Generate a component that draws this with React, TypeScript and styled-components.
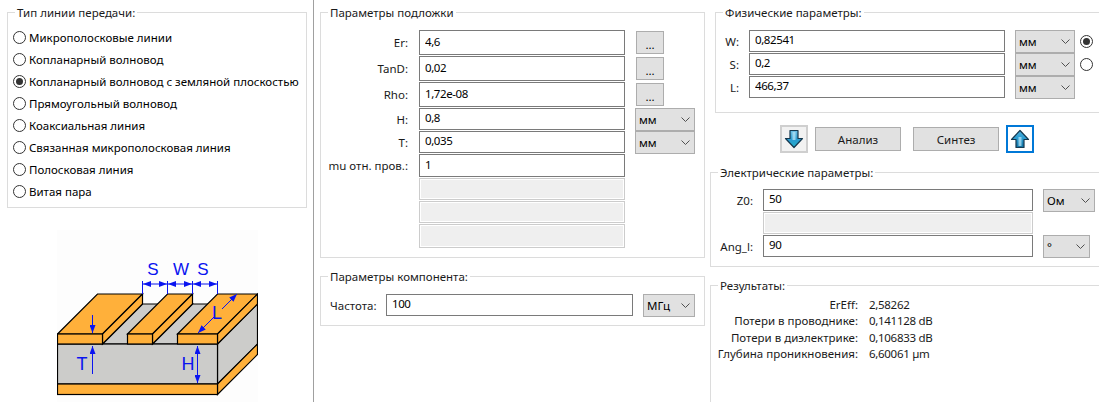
import styled, { createGlobalStyle } from "styled-components";

const GlobalStyle = createGlobalStyle`
  html, body {
    margin: 0;
    padding: 0;
    background: #ffffff;
  }
  body {
    font-family: "Noto Sans", "Open Sans", sans-serif;
    font-size: 11.5px;
    color: #000000;
  }
`;

const Page = styled.div`
  display: flex;
  width: 1099px;
  height: 402px;
  overflow: hidden;
`;

const LeftColumn = styled.div`
  flex: none;
  width: 314px;
  height: 402px;
  box-sizing: border-box;
  padding: 4px 0 0 7px;
  border-right: 1px solid #a0a0a0;
`;

const MiddleColumn = styled.div`
  flex: none;
  width: 391px;
  padding: 4px 0 0 6px;
  box-sizing: border-box;
  display: flex;
  flex-direction: column;
  gap: 10px;
`;

const RightColumn = styled.div`
  flex: none;
  width: 394px;
  padding: 4px 0 0 5px;
  box-sizing: border-box;
`;

const Group = styled.fieldset<{ $w: number; $h: number; $pt: number; $ml?: number; $mt?: number }>`
  margin: ${(p) => p.$mt ?? 0}px 0 0 ${(p) => p.$ml ?? 0}px;
  padding: ${(p) => p.$pt}px 0 0 0;
  width: ${(p) => p.$w}px;
  height: ${(p) => p.$h}px;
  box-sizing: border-box;
  min-width: 0;
  border: 1px solid #dcdcdc;
`;

const Caption = styled.legend`
  margin-left: 7px;
  padding: 0 2px;
  line-height: 17px;
  height: 17px;
  font-size: 11.5px;
  color: #1a1a1a;
`;

const RadioRow = styled.label`
  display: flex;
  align-items: center;
  gap: 3px;
  height: 22.1px;
  padding-left: 5px;
  white-space: nowrap;
`;

const RadioMark = styled.span<{ $on?: boolean }>`
  flex: none;
  width: 13px;
  height: 13px;
  box-sizing: border-box;
  border: 1px solid #333333;
  border-radius: 50%;
  display: flex;
  align-items: center;
  justify-content: center;

  &::after {
    content: "";
    display: ${(p) => (p.$on ? "block" : "none")};
    width: 7px;
    height: 7px;
    border-radius: 50%;
    background: #333333;
  }
`;

const DiagramBox = styled.div`
  margin: 22px 0 0 50px;
  width: 201px;
  height: 172px;
  background: #fdfdfd;
`;

const Row = styled.div<{ $h: number; $gap?: number }>`
  display: flex;
  gap: ${(p) => p.$gap ?? 10}px;
  height: ${(p) => p.$h}px;
  padding-bottom: 1px;
  box-sizing: border-box;
`;

const FieldLabel = styled.span<{ $w: number; $left?: boolean }>`
  flex: none;
  width: ${(p) => p.$w}px;
  display: flex;
  align-items: center;
  justify-content: ${(p) => (p.$left ? "flex-start" : "flex-end")};
  padding-left: ${(p) => (p.$left ? 9 : 0)}px;
  box-sizing: border-box;
  white-space: nowrap;
  color: #1a1a1a;
`;

const Field = styled.input<{ $w: number }>`
  flex: none;
  width: ${(p) => p.$w}px;
  box-sizing: border-box;
  margin: 0;
  padding: 0 5px 3px;
  font: inherit;
  letter-spacing: -0.4px;
  color: #000000;
  background: #ffffff;
  border: 1px solid #7a7a7a;
  outline: none;
  border-radius: 0;

  &:disabled {
    background: #efefef;
    border-color: #cccccc;
    box-shadow: inset 0 0 0 1px #ffffff;
  }
`;

const DotsButton = styled.button`
  flex: none;
  width: 28px;
  margin: 1px 0;
  padding: 4px 0 0;
  font: inherit;
  color: #000000;
  background: #e1e1e1;
  border: 1px solid #adadad;
  border-radius: 0;
`;

const Combo = styled.div<{ $w: number; $ml?: number }>`
  flex: none;
  width: ${(p) => p.$w}px;
  margin: 0 0 -1px ${(p) => p.$ml ?? 0}px;
  box-sizing: border-box;
  display: flex;
  align-items: center;
  justify-content: space-between;
  padding: 0 4px 0 3px;
  background: #e1e1e1;
  border: 1px solid #adadad;
  color: #000000;
`;

const ComboRadio = styled(RadioMark)`
  align-self: center;
  margin-left: -5px;
`;

const ActionRow = styled.div`
  display: flex;
  align-items: center;
  margin: 12px 0 11px 70px;
  height: 28px;
`;

const ArrowButton = styled.button<{ $focused?: boolean; $ml?: number }>`
  flex: none;
  width: 28px;
  height: 28px;
  margin-left: ${(p) => p.$ml ?? 0}px;
  padding: 0;
  display: flex;
  align-items: center;
  justify-content: center;
  box-sizing: border-box;
  background: ${(p) => (p.$focused ? "#ffffff" : "#f2f2f2")};
  border: 2px solid ${(p) => (p.$focused ? "#0078d7" : "#cfcfcf")};
  border-radius: 0;
`;

const ActionButton = styled.button<{ $ml: number }>`
  flex: none;
  width: 86px;
  height: 24px;
  margin-left: ${(p) => p.$ml}px;
  padding: 0;
  font: inherit;
  color: #1a1a1a;
  background: #e1e1e1;
  border: 1px solid #adadad;
  border-radius: 0;
`;

const ResultRow = styled.div`
  display: grid;
  grid-template-columns: 147px auto;
  column-gap: 11px;
  height: 16.3px;
  line-height: 16px;
  white-space: nowrap;
  color: #1a1a1a;
`;

const ResultName = styled.span`
  text-align: right;
`;

const ResultValue = styled.span`
  letter-spacing: -0.3px;
`;

const Chevron = () => (
  <svg width="9" height="5" viewBox="0 0 9 5" fill="none">
    <polyline points="0.5,0.5 4.5,4.5 8.5,0.5" stroke="#505050" strokeWidth="1" />
  </svg>
);

const DownArrow = () => (
  <svg width="20" height="20" viewBox="0 0 20 20">
    <defs>
      <linearGradient id="downFill" x1="0" y1="0" x2="0" y2="1">
        <stop offset="0" stopColor="#6fc0e6" />
        <stop offset="0.55" stopColor="#2a9bd0" />
        <stop offset="1" stopColor="#20b0c8" />
      </linearGradient>
    </defs>
    <path d="M6 1.5 H14 V9.5 H18.5 L10 18.5 L1.5 9.5 H6 Z" fill="url(#downFill)" stroke="#14384f" strokeWidth="1.2" strokeLinejoin="round" />
    <path d="M8.5 3 H11.5 V11 H8.5 Z" fill="#b5e3f6" opacity="0.75" />
  </svg>
);

const UpArrow = () => (
  <svg width="20" height="20" viewBox="0 0 20 20">
    <defs>
      <linearGradient id="upFill" x1="0" y1="0" x2="0" y2="1">
        <stop offset="0" stopColor="#4aaedc" />
        <stop offset="0.5" stopColor="#2a9bd0" />
        <stop offset="1" stopColor="#0f6f9f" />
      </linearGradient>
    </defs>
    <path d="M10 1.5 L18.5 10.5 H14 V18.5 H6 V10.5 H1.5 Z" fill="url(#upFill)" stroke="#14384f" strokeWidth="1.2" strokeLinejoin="round" />
    <path d="M8.5 8 H11.5 V17 H8.5 Z" fill="#b5e3f6" opacity="0.75" />
  </svg>
);

const BLUE = "#0a14f0";

const StripDiagram = () => (
  <svg width="201" height="172" viewBox="0 0 201 172">
    <defs>
      <marker id="tip" viewBox="0 0 8 6" refX="8" refY="3" markerWidth="8" markerHeight="6" orient="auto-start-reverse">
        <path d="M0 0 L8 3 L0 6 Z" fill={BLUE} />
      </marker>
    </defs>
    <g stroke="#000000" strokeWidth="1.2" strokeLinejoin="miter">
      <path d="M45.5 114 L85.5 74 H135.5 L95.5 114 Z" fill="#ccccca" />
      <path d="M95.5 114 L135.5 74 H160 L120 114 Z" fill="#ccccca" />
      <path d="M160.5 114 L200.5 74 V114 L160.5 154 Z" fill="#ccccca" />
      <path d="M160.5 154 L200.5 114 V124.5 L160.5 164.5 Z" fill="#ffb03a" />
      <rect x="0.5" y="114" width="160" height="40" fill="#ccccca" />
      <rect x="0.5" y="154" width="160" height="10.5" fill="#ffb03a" />
      <path d="M0.5 104 L40.5 64 H85.5 L45.5 104 Z" fill="#ffb03a" />
      <path d="M45.5 104 L85.5 64 V74 L45.5 114 Z" fill="#ffb03a" />
      <rect x="0.5" y="104" width="45" height="10" fill="#ffb03a" />
      <path d="M70.5 104 L110.5 64 H135.5 L95.5 104 Z" fill="#ffb03a" />
      <path d="M95.5 104 L135.5 64 V74 L95.5 114 Z" fill="#ffb03a" />
      <rect x="70.5" y="104" width="25" height="10" fill="#ffb03a" />
      <path d="M120.5 104 L160.5 64 H200.5 L160.5 104 Z" fill="#ffb03a" />
      <path d="M160.5 104 L200.5 64 V74 L160.5 114 Z" fill="#ffb03a" />
      <rect x="120.5" y="104" width="40" height="10" fill="#ffb03a" />
    </g>
    <g stroke={BLUE} strokeWidth="1" fill="none">
      <path d="M85.5 51 V64 M110.5 51 V64 M135.5 51 V64 M160.5 51 V64" />
      <line x1="86" y1="54" x2="110" y2="54" markerStart="url(#tip)" markerEnd="url(#tip)" />
      <line x1="111" y1="54" x2="135" y2="54" markerStart="url(#tip)" markerEnd="url(#tip)" />
      <line x1="136" y1="54" x2="160" y2="54" markerStart="url(#tip)" markerEnd="url(#tip)" />
      <line x1="35.5" y1="85" x2="35.5" y2="103" markerEnd="url(#tip)" />
      <line x1="35.5" y1="144" x2="35.5" y2="116" markerEnd="url(#tip)" />
      <line x1="140.5" y1="116" x2="140.5" y2="153" markerStart="url(#tip)" markerEnd="url(#tip)" />
      <line x1="141" y1="103" x2="157" y2="87" markerStart="url(#tip)" />
      <line x1="165" y1="79" x2="180" y2="64" markerEnd="url(#tip)" />
    </g>
    <g fill={BLUE} fontFamily="Liberation Sans, sans-serif" fontSize="17" textAnchor="middle">
      <text x="96" y="45">S</text>
      <text x="124" y="45">W</text>
      <text x="146" y="45">S</text>
      <text x="160" y="89" fontSize="18">L</text>
      <text x="25" y="140" fontSize="18">T</text>
      <text x="131" y="140" fontSize="18">H</text>
    </g>
  </svg>
);

const lineTypes = [
  "Микрополосковые линии",
  "Копланарный волновод",
  "Копланарный волновод с земляной плоскостью",
  "Прямоугольный волновод",
  "Коаксиальная линия",
  "Связанная микрополосковая линия",
  "Полосковая линия",
  "Витая пара",
];

const results = [
  ["ErEff:", "2,58262"],
  ["Потери в проводнике:", "0,141128 dB"],
  ["Потери в диэлектрике:", "0,106833 dB"],
  ["Глубина проникновения:", "6,60061 µm"],
];

export default function App() {
  return (
    <Page>
      <GlobalStyle />
      <LeftColumn>
        <Group $w={300} $h={204} $pt={5}>
          <Caption>Тип линии передачи:</Caption>
          {lineTypes.map((name, i) => (
            <RadioRow key={name}>
              <RadioMark $on={i === 2} />
              {name}
            </RadioRow>
          ))}
        </Group>
        <DiagramBox>
          <StripDiagram />
        </DiagramBox>
      </LeftColumn>

      <MiddleColumn>
        <Group $w={385} $h={254} $pt={9}>
          <Caption>Параметры подложки</Caption>
          <Row $h={26} $gap={11}>
            <FieldLabel $w={87}>Er:</FieldLabel>
            <Field $w={206} defaultValue="4,6" readOnly />
            <DotsButton>...</DotsButton>
          </Row>
          <Row $h={26} $gap={11}>
            <FieldLabel $w={87}>TanD:</FieldLabel>
            <Field $w={206} defaultValue="0,02" readOnly />
            <DotsButton>...</DotsButton>
          </Row>
          <Row $h={26} $gap={11}>
            <FieldLabel $w={87}>Rho:</FieldLabel>
            <Field $w={206} defaultValue="1,72e-08" readOnly />
            <DotsButton>...</DotsButton>
          </Row>
          <Row $h={23} $gap={11}>
            <FieldLabel $w={87}>H:</FieldLabel>
            <Field $w={206} defaultValue="0,8" readOnly />
            <Combo $w={60} $ml={-1}>мм<Chevron /></Combo>
          </Row>
          <Row $h={23} $gap={11}>
            <FieldLabel $w={87}>T:</FieldLabel>
            <Field $w={206} defaultValue="0,035" readOnly />
            <Combo $w={60} $ml={-1}>мм<Chevron /></Combo>
          </Row>
          <Row $h={24} $gap={11}>
            <FieldLabel $w={87}>mu отн. пров.:</FieldLabel>
            <Field $w={206} defaultValue="1" readOnly />
          </Row>
          <Row $h={23} $gap={11}>
            <FieldLabel $w={87} />
            <Field $w={206} disabled />
          </Row>
          <Row $h={23} $gap={11}>
            <FieldLabel $w={87} />
            <Field $w={206} disabled />
          </Row>
          <Row $h={25} $gap={11}>
            <FieldLabel $w={87} />
            <Field $w={206} disabled />
          </Row>
        </Group>

        <Group $w={385} $h={58} $pt={9}>
          <Caption>Параметры компонента:</Caption>
          <Row $h={23}>
            <FieldLabel $w={55} $left>Частота:</FieldLabel>
            <Field $w={247} defaultValue="100" readOnly />
            <Combo $w={52}>МГц<Chevron /></Combo>
          </Row>
        </Group>
      </MiddleColumn>

      <RightColumn>
        <Group $w={400} $h={109} $pt={9} $ml={5}>
          <Caption>Физические параметры:</Caption>
          <Row $h={23}>
            <FieldLabel $w={23}>W:</FieldLabel>
            <Field $w={256} defaultValue="0,82541" readOnly />
            <Combo $w={60}>мм<Chevron /></Combo>
            <ComboRadio $on />
          </Row>
          <Row $h={23}>
            <FieldLabel $w={23}>S:</FieldLabel>
            <Field $w={256} defaultValue="0,2" readOnly />
            <Combo $w={60}>мм<Chevron /></Combo>
            <ComboRadio />
          </Row>
          <Row $h={23}>
            <FieldLabel $w={23}>L:</FieldLabel>
            <Field $w={256} defaultValue="466,37" readOnly />
            <Combo $w={60}>мм<Chevron /></Combo>
          </Row>
        </Group>

        <ActionRow>
          <ArrowButton><DownArrow /></ArrowButton>
          <ActionButton $ml={7}>Анализ</ActionButton>
          <ActionButton $ml={12}>Синтез</ActionButton>
          <ArrowButton $focused $ml={7}><UpArrow /></ArrowButton>
        </ActionRow>

        <Group $w={400} $h={103} $pt={8}>
          <Caption>Электрические параметры:</Caption>
          <Row $h={23}>
            <FieldLabel $w={42}>Z0:</FieldLabel>
            <Field $w={270} defaultValue="50" readOnly />
            <Combo $w={52}>Ом<Chevron /></Combo>
          </Row>
          <Row $h={23}>
            <FieldLabel $w={42} />
            <Field $w={270} disabled />
          </Row>
          <Row $h={23}>
            <FieldLabel $w={42}>Ang_l:</FieldLabel>
            <Field $w={270} defaultValue="90" readOnly />
            <Combo $w={47}>°<Chevron /></Combo>
          </Row>
        </Group>

        <Group $w={400} $h={200} $pt={3} $mt={10}>
          <Caption>Результаты:</Caption>
          {results.map(([name, value]) => (
            <ResultRow key={name}>
              <ResultName>{name}</ResultName>
              <ResultValue>{value}</ResultValue>
            </ResultRow>
          ))}
        </Group>
      </RightColumn>
    </Page>
  );
}
